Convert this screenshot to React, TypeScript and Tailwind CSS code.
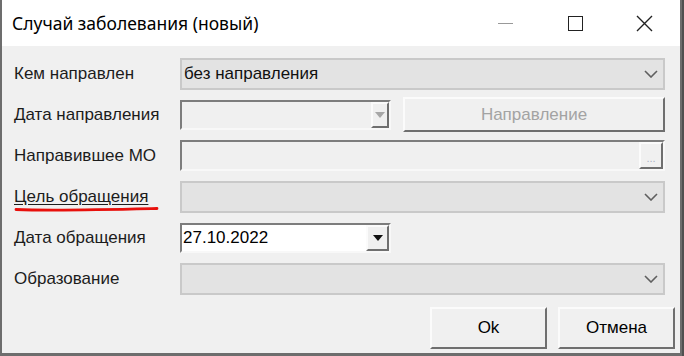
const sunken = 'border-2 border-t-[#7d7d7d] border-l-[#7d7d7d] border-b-[#f8f8f8] border-r-[#f8f8f8]';
const raised = 'border-2 border-t-[#fbfbfb] border-l-[#fbfbfb] border-b-[#6f6f6f] border-r-[#6f6f6f]';

function Chevron() {
  return (
    <svg width="14" height="8" viewBox="0 0 14 8">
      <path d="M1 1l6 6 6-6" stroke="#5f5f5f" strokeWidth="1.6" fill="none" />
    </svg>
  );
}

function Triangle({ color }: { color: string }) {
  return (
    <svg width="10" height="6" viewBox="0 0 10 6">
      <path d="M0 0h10L5 6z" fill={color} />
    </svg>
  );
}

function FlatCombo({ value }: { value?: string }) {
  return (
    <div className="flex-1 h-[32px] flex items-center justify-between bg-[#e3e3e3] border-2 border-[#c9c9c9] pl-[2px] pr-[5px]">
      <span className="text-[17px] text-[#111]">{value}</span>
      <Chevron />
    </div>
  );
}

function Row({ label, children, marked }: { label: string; children: React.ReactNode; marked?: boolean }) {
  return (
    <div className="h-[41px] flex items-center">
      <div className="w-[166px] relative">
        <span className={`text-[17px] text-[#1c1c1c] ${marked ? 'underline underline-offset-[2px]' : ''}`}>{label}</span>
        {marked && (
          <svg className="absolute left-0 top-[21px]" width="150" height="8" viewBox="0 0 150 8">
            <path d="M2 4.5 C 40 6, 100 4.5, 143 3.5" stroke="#e8100c" strokeWidth="2.8" fill="none" strokeLinecap="round" />
          </svg>
        )}
      </div>
      {children}
    </div>
  );
}

export default function App() {
  return (
    <div className="w-[684px] h-[356px] flex bg-[#505050]" style={{ fontFamily: '"Liberation Sans", Arial, sans-serif' }}>
      <div className="w-[682px] h-full flex flex-col bg-[#f0f0f0] border-l-2 border-r-2 border-b-[3px] border-[#6d6d6d]">
        {/* title bar */}
        <div className="h-[46px] bg-white flex items-center">
          <span className="pl-[10px] text-[17.5px] text-black" style={{ fontFamily: '"Noto Sans", sans-serif' }}>
            Случай заболевания (новый)
          </span>
          <div className="ml-auto flex items-center h-full">
            <div className="w-[70px] h-full flex items-center justify-center">
              <div className="w-[15px] h-px bg-[#999]" />
            </div>
            <div className="w-[70px] h-full flex items-center justify-center">
              <div className="w-[15px] h-[15px] border border-[#222]" />
            </div>
            <div className="w-[70px] h-full flex items-center justify-center pr-[2px]">
              <svg width="17" height="17" viewBox="0 0 17 17">
                <path d="M1 1l15 15M16 1L1 16" stroke="#222" strokeWidth="1.4" />
              </svg>
            </div>
          </div>
        </div>

        {/* client */}
        <div className="flex-1 flex flex-col pl-[12px] pr-[15px] pt-[7px]">
          <Row label="Кем направлен">
            <FlatCombo value="без направления" />
          </Row>
          <Row label="Дата направления">
            <div className={`w-[211px] h-[30px] ${sunken} flex justify-end items-stretch`}>
              <div className={`w-[18px] ${raised} border-t-[#f0f0f0] border-l-[#f0f0f0] flex items-center justify-center`}>
                <Triangle color="#a7a7a7" />
              </div>
            </div>
            <button className={`ml-[12px] flex-1 h-[35px] ${raised} bg-[#f0f0f0] text-[17px] text-[#a3a3a3]`}>Направление</button>
          </Row>
          <Row label="Направившее МО">
            <div className={`flex-1 h-[31px] ${sunken} flex justify-end items-stretch`}>
              <div className={`w-[24px] ${raised} border-t-[#f0f0f0] border-l-[#f0f0f0] flex items-end justify-center pb-[3px] text-[11px] leading-none text-[#a9b0c2]`}>
                ...
              </div>
            </div>
          </Row>
          <Row label="Цель обращения" marked>
            <FlatCombo />
          </Row>
          <Row label="Дата обращения">
            <div className={`w-[211px] h-[30px] ${sunken} bg-white flex items-stretch`}>
              <span className="flex-1 flex items-center pl-[1px] text-[17px] text-black">27.10.2022</span>
              <div className={`w-[23px] ${raised} border-t-[#f0f0f0] border-l-[#f0f0f0] bg-[#f0f0f0] flex items-center justify-center`}>
                <Triangle color="#111" />
              </div>
            </div>
          </Row>
          <Row label="Образование">
            <FlatCombo />
          </Row>

          <div className="flex justify-end gap-[11px] mt-[8px] mr-[-10px]">
            <button className={`w-[117px] h-[42px] ${raised} bg-[#f0f0f0] text-[17px] text-black`}>Ok</button>
            <button className={`w-[117px] h-[42px] ${raised} bg-[#f0f0f0] text-[17px] text-black`}>Отмена</button>
          </div>
        </div>
      </div>
    </div>
  );
}
